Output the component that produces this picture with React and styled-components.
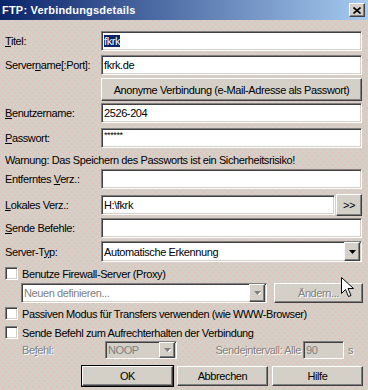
import React from 'react';
import styled, { createGlobalStyle, css } from 'styled-components';

const GlobalStyle = createGlobalStyle`
body {
  margin: 0;
  background: #d4d0c8;
}
`;

const raised = css`
  background: #d4d0c8;
  border-top: 1px solid #fff;
  border-left: 1px solid #fff;
  border-right: 1px solid #404040;
  border-bottom: 1px solid #404040;
  box-shadow: inset -1px -1px #808080;
`;

const sunken = css`
  border-top: 1px solid #808080;
  border-left: 1px solid #808080;
  border-right: 1px solid #fff;
  border-bottom: 1px solid #fff;
  box-shadow: inset 1px 1px #404040, inset -1px -1px #d4d0c8;
`;

const Window = styled.div`
position: relative;
width: 368px;
height: 390px;
overflow: hidden;
background-color: #d4d0c8;
background-image:
  radial-gradient(circle, #e2c3bb 0.7px, transparent 1px),
  radial-gradient(circle, #e2c3bb 0.7px, transparent 1px);
background-size: 6px 6px;
background-position: 0 0, 3px 3px;
font-family: "Liberation Sans", Arial, sans-serif;
font-size: 11px;
letter-spacing: -0.4px;
color: #000;
`;

const TitleBar = styled.div`
height: 20px;
display: flex;
align-items: center;
justify-content: space-between;
padding: 0 3px 0 2px;
background: linear-gradient(to right, #0a246a, #a6caf0);
`;

const TitleText = styled.span`
color: #fff;
font-weight: bold;
font-size: 11px;
letter-spacing: 0.2px;
`;

const CloseButton = styled.div`
${raised};
width: 14px;
height: 12px;
display: flex;
align-items: center;
justify-content: center;
`;

const Body = styled.div`
padding: 0 6px 0 5px;
`;

const Row = styled.div`
display: flex;
align-items: center;
height: ${({ h }) => h}px;
margin-top: ${({ mt }) => mt}px;
padding-left: ${({ indent }) => indent || 0}px;
`;

const Label = styled.span`
flex: none;
width: ${({ w }) => w || 96}px;
white-space: nowrap;
color: ${({ disabled }) => (disabled ? '#808080' : '#000')};
text-shadow: ${({ disabled }) => (disabled ? '1px 1px #fff' : 'none')};
`;

const Key = styled.span`
text-decoration: underline;
`;

const Field = styled.div`
${sunken};
box-sizing: border-box;
flex: ${({ w }) => (w ? 'none' : '1')};
width: ${({ w }) => (w ? `${w}px` : 'auto')};
height: ${({ h }) => h || 20}px;
background: ${({ disabled }) => (disabled ? '#d4d0c8' : '#fff')};
color: ${({ disabled }) => (disabled ? '#808080' : '#000')};
display: flex;
align-items: center;
padding: 0 2px 0 2px;
white-space: nowrap;
overflow: hidden;
`;

const Selected = styled.span`
background: #0a246a;
color: #fff;
`;

const Stars = styled.span`
font-size: 9px;
align-self: flex-start;
margin-top: 1px;
`;

const FieldText = styled.span`
flex: 1;
color: ${({ disabled }) => (disabled ? '#808080' : 'inherit')};
`;

const ArrowButton = styled.div`
${raised};
flex: none;
width: 14px;
height: ${({ h }) => h || 15}px;
margin-right: -1px;
display: flex;
align-items: center;
justify-content: center;
`;

const Button = styled.div`
${raised};
box-sizing: border-box;
flex: none;
width: ${({ w }) => w}px;
height: ${({ h }) => h || 20}px;
margin-left: ${({ ml }) => ml || 0}px;
display: flex;
align-items: center;
justify-content: center;
white-space: nowrap;
color: ${({ disabled }) => (disabled ? '#808080' : '#000')};
text-shadow: ${({ disabled }) => (disabled ? '1px 1px #fff' : 'none')};
${({ primary }) =>
    primary &&
    css`
      outline: 1px solid #000;
      outline-offset: 0;
      border-right-color: #404040;
    `}
`;

const Warning = styled.div`
height: 16px;
margin-top: 4px;
display: flex;
align-items: center;
`;

const Check = styled.div`
${sunken};
box-sizing: border-box;
flex: none;
width: 13px;
height: 13px;
background: #fff;
margin-right: 4px;
`;

const ButtonBar = styled.div`
display: flex;
justify-content: flex-end;
gap: 4px;
margin-top: 7px;
margin-right: -1px;
`;

const Cursor = styled.svg`
position: absolute;
left: 341px;
top: 277px;
`;

const Triangle = ({ disabled }) => (
  <svg width="7" height="4" viewBox="0 0 7 4">
    {disabled && <path d="M1 1h7L4.5 4.5z" fill="#fff" />}
    <path d="M0 0h7L3.5 4z" fill={disabled ? '#808080' : '#000'} />
  </svg>
);

const Combo = ({ text, disabled, w, h, textDisabled }) => (
  <Field w={w} h={h} disabled={disabled}>
    <FieldText disabled={textDisabled || disabled}>{text}</FieldText>
    <ArrowButton h={(h || 20) - 4}>
      <Triangle disabled={disabled || textDisabled} />
    </ArrowButton>
  </Field>
);

export default function App() {
  return (
    <>
      <GlobalStyle />
      <Window>
        <TitleBar>
          <TitleText>FTP: Verbindungsdetails</TitleText>
          <CloseButton>
            <svg width="8" height="7" viewBox="0 0 8 7">
              <path d="M0.5 0.5l7 6M7.5 0.5l-7 6" stroke="#000" strokeWidth="1.6" />
            </svg>
          </CloseButton>
        </TitleBar>
        <Body>
          <Row h={20} mt={11}>
            <Label><Key>T</Key>itel:</Label>
            <Field><Selected>fkrk</Selected></Field>
          </Row>
          <Row h={20} mt={4}>
            <Label>Server<Key>n</Key>ame[:Port]:</Label>
            <Field>fkrk.de</Field>
          </Row>
          <Row h={23} mt={3}>
            <Button w={261} h={23} ml={96}>Anonyme Verbindung (e-Mail-Adresse als Passwort)</Button>
          </Row>
          <Row h={20} mt={2}>
            <Label><Key>B</Key>enutzername:</Label>
            <Field>2526-204</Field>
          </Row>
          <Row h={20} mt={5}>
            <Label><Key>P</Key>asswort:</Label>
            <Field><Stars>******</Stars></Field>
          </Row>
          <Warning>Warnung: Das Speichern des Passworts ist ein Sicherheitsrisiko!</Warning>
          <Row h={20} mt={1}>
            <Label>Entferntes <Key>V</Key>erz.:</Label>
            <Field />
          </Row>
          <Row h={22} mt={5}>
            <Label><Key>L</Key>okales Verz.:</Label>
            <Field>H:\fkrk</Field>
            <Button w={26} h={22} ml={1}>&gt;&gt;</Button>
          </Row>
          <Row h={20} mt={2}>
            <Label><Key>S</Key>ende Befehle:</Label>
            <Field />
          </Row>
          <Row h={21} mt={3}>
            <Label>Server-T<Key>y</Key>p:</Label>
            <Combo text="Automatische Erkennung" h={21} />
          </Row>
          <Row h={13} mt={5}>
            <Check />
            <span>Benutze Firewall-Server (Proxy)</span>
          </Row>
          <Row h={20} mt={3} indent={16}>
            <Combo text="Neuen definieren..." w={246} textDisabled />
            <Button w={89} h={20} ml={7} disabled>Ändern...</Button>
          </Row>
          <Row h={13} mt={4}>
            <Check />
            <span>Passiven Modus für Transfers verwenden (wie WWW-Browser)</span>
          </Row>
          <Row h={13} mt={6}>
            <Check />
            <span>Sende Befehl zum Aufrechterhalten der Verbindung</span>
          </Row>
          <Row h={18} mt={2} indent={17}>
            <Label w={83} disabled>Be<Key>f</Key>ehl:</Label>
            <Combo text="NOOP" w={72} h={18} disabled />
            <Label w={124} disabled style={{ textAlign: 'right', marginLeft: 'auto' }}>
              Sende<Key>i</Key>ntervall: Alle
            </Label>
            <Field w={41} h={18} disabled style={{ marginLeft: 2 }}>90</Field>
            <Label w={14} disabled style={{ paddingLeft: 4 }}>s</Label>
          </Row>
          <ButtonBar>
            <Button w={91} primary>OK</Button>
            <Button w={91}>Abbrechen</Button>
            <Button w={91}>Hilfe</Button>
          </ButtonBar>
        </Body>
        <Cursor width="13" height="21" viewBox="0 0 13 21">
          <path d="M0.5 0.5v16l4-4 3 7 2.5-1-3-7h5.5z" fill="#fff" stroke="#000" strokeWidth="1" />
        </Cursor>
      </Window>
    </>
  );
}
